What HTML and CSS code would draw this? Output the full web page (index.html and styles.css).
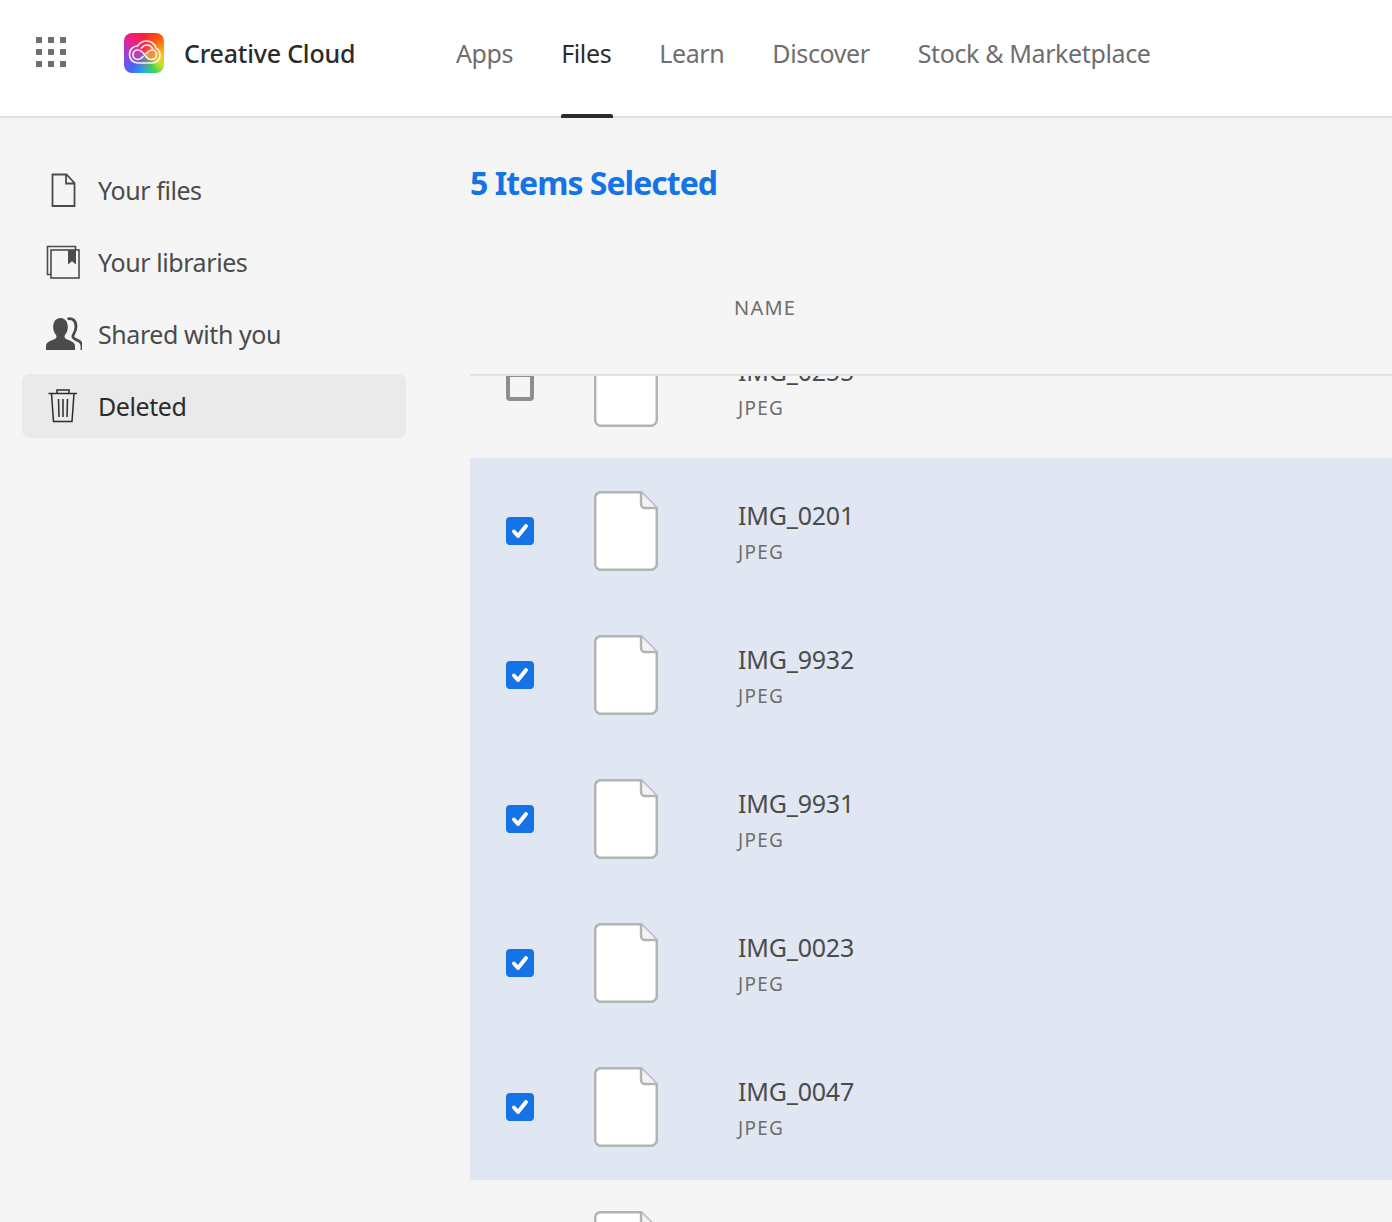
FILE: index.html
```html
<!DOCTYPE html>
<html lang="en">
<head>
<meta charset="utf-8">
<title>Creative Cloud</title>
<link rel="stylesheet" href="styles.css">
</head>
<body>
<header class="topbar">
  <svg class="apps-icon" viewBox="0 0 30 30" width="30" height="30"><g fill="#6e6e6e"><rect x="0" y="0" width="6" height="6" rx=".6"/><rect x="12" y="0" width="6" height="6" rx=".6"/><rect x="24" y="0" width="6" height="6" rx=".6"/><rect x="0" y="12" width="6" height="6" rx=".6"/><rect x="12" y="12" width="6" height="6" rx=".6"/><rect x="24" y="12" width="6" height="6" rx=".6"/><rect x="0" y="24" width="6" height="6" rx=".6"/><rect x="12" y="24" width="6" height="6" rx=".6"/><rect x="24" y="24" width="6" height="6" rx=".6"/></g></svg>
  <div class="logo">
    <svg viewBox="0 0 40 40" width="40" height="40"><g fill="none" stroke="#fff" stroke-opacity=".9" stroke-width="1.7" stroke-linecap="round"><path d="M14 30C8.500 30 5.500 26 5.500 21.500 5.500 16.500 9 13 13.500 13 16 9.500 19 8 22.500 8 27 8 31 11 32 15 34.500 16.500 36 19 36 22 36 27 32 30 28 30z"/><path d="M14 26.500C10.500 26.500 9 24 9 21.700 9 18.800 11.500 17 14 17 16.500 17 18 18.500 20 21 22 23.500 23.800 26.500 27.500 26.500 30.500 26.500 32.500 24.300 32.500 21.800 32.500 19 30.500 17 28 17 25.500 17 24 18.500 22.500 20.300"/><path d="M14 26.500C16.200 26.500 17.700 25.200 19 23.500"/><path d="M17.500 15C19 13 21 12 23 12 25.500 12 27.500 13.500 28.500 15.500"/></g></svg>
  </div>
  <span class="brand">Creative Cloud</span>
  <nav class="nav">
    <a class="nav-link">Apps</a>
    <a class="nav-link nav-active">Files</a>
    <a class="nav-link">Learn</a>
    <a class="nav-link">Discover</a>
    <a class="nav-link">Stock &amp; Marketplace</a>
  </nav>
</header>
<div class="layout">
  <aside class="sidebar">
    <div class="side-item">
      <svg class="side-icon" viewBox="0 0 36 36" width="36" height="36"><path d="M7.500 2.500h14L29.500 11v23h-22z M21 2.500V11.500h8.500" fill="none" stroke="#4b4b4b" stroke-width="1.800"/></svg>
      <span>Your files</span>
    </div>
    <div class="side-item">
      <svg class="side-icon" viewBox="0 0 36 36" width="36" height="36"><g fill="none" stroke="#4b4b4b" stroke-width="1.600"><path d="M6 30.500H2.500V2.500h28v4"/><rect x="6" y="6" width="28" height="28"/></g><path d="M23 6h8v14.500l-4-3.300-4 3.300z" fill="#4b4b4b"/></svg>
      <span>Your libraries</span>
    </div>
    <div class="side-item">
      <svg class="side-icon icon-shared" viewBox="0 0 36 36" width="36" height="36"><path d="M0 34v-4c0-3 2.500-4.500 6.500-6 3-1.100 4-2 4-3.500 0-1.200-.9-2-1.800-3.500-1-1.600-1.500-3.500-1.500-6C7.200 5.500 10 2 14.500 2S21.800 5.500 21.800 11c0 2.500-.6 4.400-1.500 6-1 1.500-1.800 2.300-1.800 3.500 0 1.500 1 2.400 4 3.500 4 1.500 6.500 3 6.500 6v4z" fill="#4b4b4b"/><path d="M21.500 3c4.500-1.500 8.500 1.500 8.500 7.500 0 3-.8 5-2 7-1 1.600-1.500 2.500-1 3.800.6 1.500 2.300 2 4.500 3 3 1.300 4.500 3.500 4.500 6v3.700" fill="none" stroke="#4b4b4b" stroke-width="2.800"/></svg>
      <span>Shared with you</span>
    </div>
    <div class="side-item side-active">
      <svg class="side-icon" viewBox="0 0 36 36" width="36" height="36"><g fill="none" stroke="#2c2c2c" stroke-width="1.500"><path d="M3.500 5.500h28.500"/><path d="M12 5.500V2h12v3.500"/><path d="M6.500 5.500 8.500 33.500h18.500l2-28"/><path d="M13.500 11l.5 18M18 11v18M22.500 11l-.5 18"/></g></svg>
      <span>Deleted</span>
    </div>
  </aside>
  <main class="content">
    <h1 class="title">5 Items Selected</h1>
    <div class="table-head"><span class="col-name">NAME</span></div>
    <div class="list-viewport">
      <div class="list">
        <div class="row">
          <span class="check"></span>
          <svg class="file" viewBox="0 0 64 80" width="64" height="80"><use href="#file-shape"/></svg>
          <div class="meta"><div class="name">IMG_0255</div><div class="kind">JPEG</div></div>
        </div>
        <div class="selection">
          <div class="row">
            <span class="check check-on"><svg viewBox="0 0 28 28" width="28" height="28"><path class="tick" d="M8 14.500l4 4.500 8-10"/></svg></span>
            <svg class="file" viewBox="0 0 64 80" width="64" height="80"><use href="#file-shape"/></svg>
            <div class="meta"><div class="name">IMG_0201</div><div class="kind">JPEG</div></div>
          </div>
          <div class="row">
            <span class="check check-on"><svg viewBox="0 0 28 28" width="28" height="28"><path class="tick" d="M8 14.500l4 4.500 8-10"/></svg></span>
            <svg class="file" viewBox="0 0 64 80" width="64" height="80"><use href="#file-shape"/></svg>
            <div class="meta"><div class="name">IMG_9932</div><div class="kind">JPEG</div></div>
          </div>
          <div class="row">
            <span class="check check-on"><svg viewBox="0 0 28 28" width="28" height="28"><path class="tick" d="M8 14.500l4 4.500 8-10"/></svg></span>
            <svg class="file" viewBox="0 0 64 80" width="64" height="80"><use href="#file-shape"/></svg>
            <div class="meta"><div class="name">IMG_9931</div><div class="kind">JPEG</div></div>
          </div>
          <div class="row">
            <span class="check check-on"><svg viewBox="0 0 28 28" width="28" height="28"><path class="tick" d="M8 14.500l4 4.500 8-10"/></svg></span>
            <svg class="file" viewBox="0 0 64 80" width="64" height="80"><use href="#file-shape"/></svg>
            <div class="meta"><div class="name">IMG_0023</div><div class="kind">JPEG</div></div>
          </div>
          <div class="row">
            <span class="check check-on"><svg viewBox="0 0 28 28" width="28" height="28"><path class="tick" d="M8 14.500l4 4.500 8-10"/></svg></span>
            <svg class="file" viewBox="0 0 64 80" width="64" height="80"><use href="#file-shape"/></svg>
            <div class="meta"><div class="name">IMG_0047</div><div class="kind">JPEG</div></div>
          </div>
        </div>
        <div class="row">
          <span class="check"></span>
          <svg class="file" viewBox="0 0 64 80" width="64" height="80"><use href="#file-shape"/></svg>
        </div>
      </div>
    </div>
  </main>
</div>
<svg class="defs" width="0" height="0"><defs><g id="file-shape"><path d="M6 1.200h41L62.800 17v56a6 6 0 0 1-6 5.800H7a6 6 0 0 1-5.800-5.800V7A6 6 0 0 1 6 1.200z" fill="#fff" stroke="#b3b3b3" stroke-width="2.500"/><path d="M47 1.200V13a4 4 0 0 0 4 4h11.800" fill="#f2f2f2" stroke="#b3b3b3" stroke-width="2.500"/></g></defs></svg>
</body>
</html>
```
FILE: styles.css
```css
* { box-sizing: border-box; }
html, body { margin: 0; height: 100%; }
body {
  width: 1392px;
  height: 1222px;
  overflow: hidden;
  background: #f5f5f5;
  font-family: "Noto Sans", "Open Sans", sans-serif;
  color: #4b4b4b;
}
.topbar {
  height: 118px;
  background: #fff;
  border-bottom: 2px solid #e1e1e1;
  display: flex;
  align-items: center;
  padding-left: 36px;
}
.apps-icon { flex: none; margin-bottom: 12px; }
.logo {
  width: 40px;
  height: 40px;
  margin-left: 58px;
  margin-bottom: 10px;
  border-radius: 8px;
  background:
    radial-gradient(circle at 50% 50%, rgba(240,60,120,.4) 0 30%, rgba(240,60,120,0) 60%),
    conic-gradient(from 0deg at 50% 50%, #ff1a2e 0deg, #ff5a10 45deg, #ffc40a 95deg, #c7e02a 125deg, #38d658 150deg, #20a8e8 185deg, #3f6cf0 215deg, #9a3fe0 265deg, #e8208e 310deg, #ff1a50 345deg, #ff1a2e 360deg);
  flex: none;
}
.logo svg { display: block; }
.brand {
  margin-left: 20px;
  margin-bottom: 10px;
  width: 272px;
  font-size: 25px;
  font-weight: 500;
  color: #2c2c2c;
  letter-spacing: -.2px;
  white-space: nowrap;
}
.nav {
  display: flex;
  gap: 48px;
  height: 116px;
}
.nav-link {
  display: flex;
  align-items: center;
  padding-bottom: 11px;
  position: relative;
  font-size: 25px;
  color: #6e6e6e;
  letter-spacing: -.38px;
  white-space: nowrap;
}
.nav-active { color: #2c2c2c; }
.nav-active::after {
  content: "";
  position: absolute;
  left: 0;
  right: -2px;
  bottom: -2px;
  height: 4px;
  border-radius: 2px 2px 0 0;
  background: #2c2c2c;
}
.layout {
  display: flex;
  height: 1104px;
}
.sidebar {
  width: 470px;
  flex: none;
  padding: 40px 64px 0 22px;
  display: flex;
  flex-direction: column;
  gap: 8px;
}
.side-item {
  height: 64px;
  display: flex;
  align-items: center;
  gap: 17px;
  padding-left: 23px;
  border-radius: 8px;
  font-size: 25px;
  letter-spacing: -.42px;
  color: #4b4b4b;
}
.side-icon { flex: none; }
.icon-shared { margin-left: 1px; margin-right: -1px; }
.side-active {
  background: #eaeaea;
  color: #2c2c2c;
}
.content {
  flex: 1;
  min-width: 0;
  display: flex;
  flex-direction: column;
}
.title {
  margin: 43px 0 0;
  height: 44px;
  line-height: 44px;
  font-size: 32px;
  font-weight: 700;
  color: #1473e6;
  letter-spacing: -.98px;
}
.table-head {
  height: 171px;
  padding: 89px 0 0 264px;
  border-bottom: 2px solid #e1e1e1;
}
.col-name {
  font-size: 20px;
  letter-spacing: 1.2px;
  color: #6e6e6e;
}
.list-viewport {
  flex: 1;
  overflow: hidden;
  min-height: 0;
}
.list { margin-top: -61px; }
.selection {
  margin: -1px 0;
  padding: 1px 0;
  background: #e1e7f2;
}
.row {
  height: 144px;
  display: flex;
  align-items: center;
  padding-left: 36px;
}
.check {
  width: 28px;
  height: 28px;
  flex: none;
  border: 4px solid #8e8e8e;
  border-radius: 4px;
  background: #f5f5f5;
}
.check-on {
  border: 0;
  background: #1473e6;
}
.check svg { display: block; }
.tick {
  fill: none;
  stroke: #fff;
  stroke-width: 4;
  stroke-linecap: round;
  stroke-linejoin: round;
}
.file { flex: none; margin-left: 60px; display: block; }
.meta { margin-left: 80px; padding-top: 4px; }
.name {
  height: 36px;
  line-height: 36px;
  font-size: 25px;
  letter-spacing: -.2px;
  color: #4b4b4b;
}
.kind {
  height: 36px;
  margin-top: 1px;
  line-height: 36px;
  font-size: 19px;
  letter-spacing: 1.25px;
  color: #6e6e6e;
}
.defs { position: absolute; }
```
